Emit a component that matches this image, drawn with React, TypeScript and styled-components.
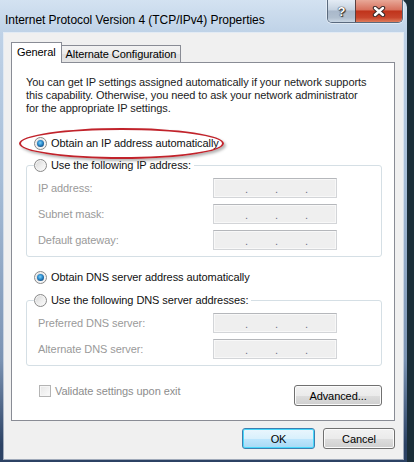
import React from 'react';
import styled, { createGlobalStyle } from 'styled-components';

const GlobalStyle = createGlobalStyle`
  html, body {
    margin: 0;
    padding: 0;
    background: #1b2e39;
  }
  body {
    font-family: 'Liberation Sans', Arial, sans-serif;
    font-size: 11px;
    letter-spacing: -0.08px;
    color: #111;
  }
`;

const Window = styled.div`
  width: 407px;
  height: 462px;
  box-sizing: border-box;
  padding: 0 4px 3px 4px;
  display: flex;
  flex-direction: column;
  border-top-right-radius: 7px;
  background: linear-gradient(
    180deg,
    #d3e2f1 0px,
    #bfd2e7 33px,
    #a6bdd7 180px,
    #7b93b3 360px,
    #2c4264 445px
  );
`;

const TitleBar = styled.div`
  height: 33px;
  display: flex;
  justify-content: space-between;
  align-items: flex-start;
`;

const Title = styled.div`
  padding: 13px 0 0 1px;
  font-size: 12px;
  line-height: 14px;
  letter-spacing: -0.05px;
  color: #000;
`;

const CaptionGroup = styled.div`
  display: flex;
  border: 1px solid #5a6a7e;
  border-top: none;
  border-radius: 0 0 5px 5px;
  overflow: hidden;
  box-shadow: 0 0 0 1px rgba(255, 255, 255, 0.45);
`;

const CaptionButton = styled.div<{ $close?: boolean }>`
  width: ${(p) => (p.$close ? 46 : 27)}px;
  height: 22px;
  display: flex;
  align-items: center;
  justify-content: center;
  color: #fff;
  font-weight: bold;
  font-size: 13px;
  text-shadow: 0 0 1px #222, 0 0 1px #222, 1px 1px 1px #333;
  border-left: ${(p) => (p.$close ? '1px solid #5a4040' : 'none')};
  background: ${(p) =>
    p.$close
      ? 'linear-gradient(180deg, #e8a898 0%, #d7715d 45%, #c0331b 50%, #c8452c 80%, #e07d5c 100%)'
      : 'linear-gradient(180deg, #e4ecf5 0%, #c5d2e0 45%, #a9b8ca 50%, #b0bfcf 80%, #c9d6e3 100%)'};
`;

const Client = styled.div`
  flex: 1;
  background: #f0f0f0;
  padding: 9px 8px 0 7px;
  box-shadow: 0 0 0 1px rgba(255, 255, 255, 0.55);
`;

const TabStrip = styled.div`
  height: 20px;
  display: flex;
  align-items: flex-end;
  position: relative;
  z-index: 1;
`;

const Tab = styled.div<{ $active?: boolean }>`
  box-sizing: border-box;
  height: ${(p) => (p.$active ? 21 : 17)}px;
  margin-bottom: ${(p) => (p.$active ? -1 : 0)}px;
  padding: ${(p) => (p.$active ? '0 5px' : '0 4px')};
  border: 1px solid #898c95;
  border-bottom: none;
  border-left: ${(p) => (p.$active ? '1px solid #898c95' : 'none')};
  background: ${(p) =>
    p.$active ? '#fff' : 'linear-gradient(180deg, #f3f3f3 0%, #ebebeb 50%, #dedede 51%, #e5e5e5 100%)'};
  line-height: ${(p) => (p.$active ? 18 : 16)}px;
  color: #000;
  white-space: nowrap;
`;

const Panel = styled.div`
  background: #fff;
  border: 1px solid #898c95;
  padding: 13px 12px 14px 14px;
  display: flex;
  flex-direction: column;
`;

const Description = styled.p`
  margin: 0;
  line-height: 13px;
  color: #1c1c1c;
`;

const RadioRow = styled.label<{ $gap?: number }>`
  position: relative;
  display: flex;
  align-items: center;
  gap: 4px;
  height: 14px;
  margin-top: ${(p) => p.$gap ?? 0}px;
  padding-left: 8px;
  color: #111;
`;

const Radio = styled.span<{ $checked?: boolean }>`
  box-sizing: border-box;
  width: 13px;
  height: 13px;
  flex: none;
  border-radius: 50%;
  border: 1px solid #8a8a8a;
  background: linear-gradient(135deg, #d4d4d4 0%, #eeeeee 55%, #fdfdfd 100%);
  box-shadow: inset 0 0 0 1px #f4f4f4;
  display: flex;
  align-items: center;
  justify-content: center;
  &::after {
    content: '';
    display: ${(p) => (p.$checked ? 'block' : 'none')};
    width: 7px;
    height: 7px;
    border-radius: 50%;
    background: radial-gradient(circle at 45% 40%, #7fd0f7 0%, #2f8fd0 40%, #0c3e73 85%);
  }
`;

const Highlight = styled.span`
  position: absolute;
  left: -7px;
  top: -8px;
  width: 205px;
  height: 31px;
  box-sizing: border-box;
  border: 2px solid #c1232b;
  border-radius: 50%;
  box-shadow: 2px 2px 3px rgba(0, 0, 0, 0.3);
  pointer-events: none;
`;

const Group = styled.fieldset<{ $gap: number }>`
  margin: ${(p) => p.$gap}px 0 0 0;
  padding: 6px 44px 6px 11px;
  border: 1px solid #d5dfe5;
  border-radius: 3px;
  display: flex;
  flex-direction: column;
  gap: 6px;
  min-width: 0;
`;

const Legend = styled.legend`
  margin-left: -4px;
  padding: 0 3px 0 0;
  display: flex;
  align-items: center;
  gap: 4px;
  height: 14px;
  color: #111;
`;

const FieldRow = styled.div`
  display: flex;
  align-items: center;
  justify-content: space-between;
  height: 20px;
`;

const FieldLabel = styled.span`
  color: #9a9a9a;
`;

const IpBox = styled.div`
  box-sizing: border-box;
  width: 124px;
  height: 20px;
  padding-left: 3px;
  display: flex;
  align-items: center;
  background: #efefef;
  border: 1px solid #d3d5d8;
  border-top-color: #b5b7bb;
  box-shadow: inset 0 0 0 1px #f8f8f8;
`;

const IpField = styled.span`
  width: 28px;
`;

const IpDot = styled.span`
  width: 2px;
  text-align: center;
  color: #6f7288;
  line-height: 14px;
  margin-top: 2px;
`;

const Footer = styled.div`
  margin-top: 19px;
  display: flex;
  justify-content: space-between;
  align-items: flex-start;
  padding-left: 13px;
`;

const CheckLabel = styled.label`
  display: flex;
  align-items: center;
  gap: 4px;
  height: 12px;
  color: #8d8d8d;
`;

const CheckBox = styled.span`
  box-sizing: border-box;
  width: 12px;
  height: 12px;
  border: 1px solid #b4b4b4;
  background: linear-gradient(135deg, #e6e6e6, #fbfbfb);
  box-shadow: inset 0 0 0 1px #f6f6f6;
`;

const Button = styled.button<{ $default?: boolean; $width: number }>`
  box-sizing: border-box;
  width: ${(p) => p.$width}px;
  height: 21px;
  padding: 0;
  font: inherit;
  letter-spacing: inherit;
  color: #000;
  border-radius: 3px;
  border: 1px solid ${(p) => (p.$default ? '#3c7fb1' : '#707070')};
  box-shadow: inset 0 0 0 1px ${(p) => (p.$default ? '#48d8fb' : '#fbfbfb')};
  background: ${(p) =>
    p.$default
      ? 'linear-gradient(180deg, #eaf6fd 0%, #d9f0fc 50%, #bee6fd 51%, #a7d9f5 100%)'
      : 'linear-gradient(180deg, #f2f2f2 0%, #ebebeb 50%, #dddddd 51%, #cfcfcf 100%)'};
`;

const ButtonBar = styled.div`
  margin-top: 7px;
  display: flex;
  justify-content: flex-end;
  gap: 8px;
`;

const IpInput = () => (
  <IpBox>
    <IpField />
    <IpDot>.</IpDot>
    <IpField />
    <IpDot>.</IpDot>
    <IpField />
    <IpDot>.</IpDot>
    <IpField />
  </IpBox>
);

const CloseGlyph = () => (
  <svg width="14" height="11" viewBox="0 0 14 11">
    <path d="M3 2 L11 9 M11 2 L3 9" stroke="#3a2a2a" strokeWidth="4.4" strokeLinecap="round" />
    <path d="M3 2 L11 9 M11 2 L3 9" stroke="#ffffff" strokeWidth="2.4" strokeLinecap="round" />
  </svg>
);

export default function App() {
  return (
    <>
      <GlobalStyle />
      <Window>
        <TitleBar>
          <Title>Internet Protocol Version 4 (TCP/IPv4) Properties</Title>
          <CaptionGroup>
            <CaptionButton>?</CaptionButton>
            <CaptionButton $close>
              <CloseGlyph />
            </CaptionButton>
          </CaptionGroup>
        </TitleBar>
        <Client>
          <TabStrip>
            <Tab $active>General</Tab>
            <Tab>Alternate Configuration</Tab>
          </TabStrip>
          <Panel>
            <Description>
              You can get IP settings assigned automatically if your network supports
              <br />
              this capability. Otherwise, you need to ask your network administrator
              <br />
              for the appropriate IP settings.
            </Description>
            <RadioRow $gap={21}>
              <Radio $checked />
              Obtain an IP address automatically
              <Highlight />
            </RadioRow>
            <Group $gap={8}>
              <Legend>
                <Radio />
                Use the following IP address:
              </Legend>
              {['IP address:', 'Subnet mask:', 'Default gateway:'].map((label) => (
                <FieldRow key={label}>
                  <FieldLabel>{label}</FieldLabel>
                  <IpInput />
                </FieldRow>
              ))}
            </Group>
            <RadioRow $gap={13}>
              <Radio $checked />
              Obtain DNS server address automatically
            </RadioRow>
            <Group $gap={9}>
              <Legend>
                <Radio />
                Use the following DNS server addresses:
              </Legend>
              {['Preferred DNS server:', 'Alternate DNS server:'].map((label) => (
                <FieldRow key={label}>
                  <FieldLabel>{label}</FieldLabel>
                  <IpInput />
                </FieldRow>
              ))}
            </Group>
            <Footer>
              <CheckLabel>
                <CheckBox />
                Validate settings upon exit
              </CheckLabel>
              <Button $width={88}>Advanced...</Button>
            </Footer>
          </Panel>
          <ButtonBar>
            <Button $default $width={73}>
              OK
            </Button>
            <Button $width={72}>Cancel</Button>
          </ButtonBar>
        </Client>
      </Window>
    </>
  );
}
